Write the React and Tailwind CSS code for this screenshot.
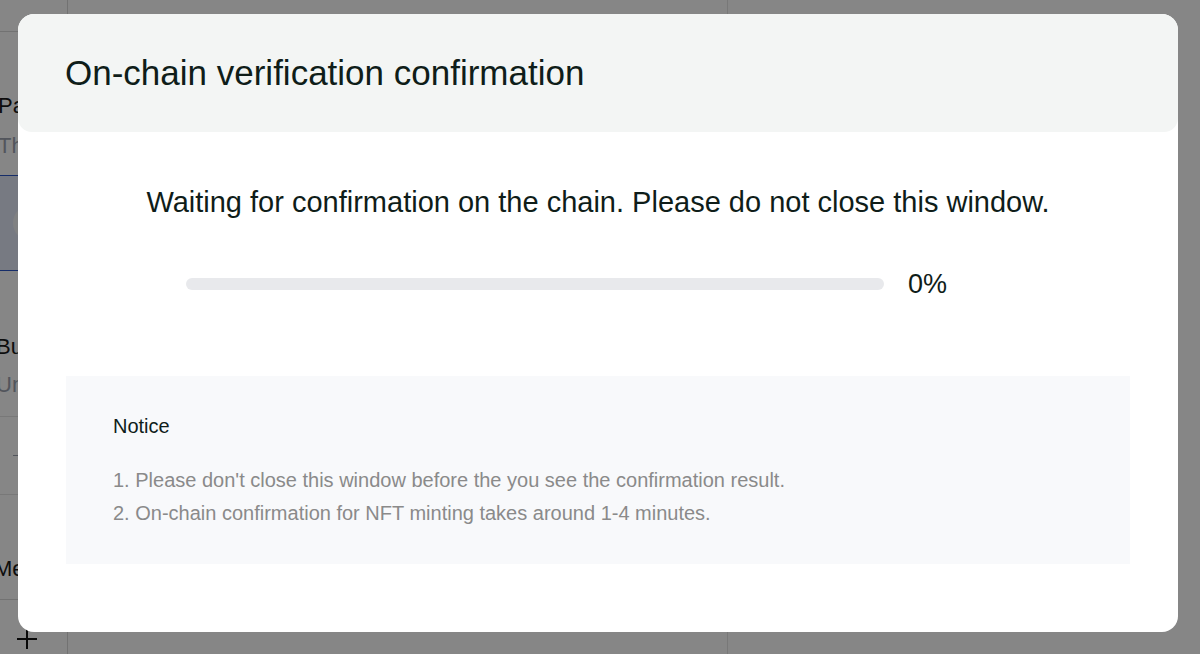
import React from "react";

const font = { fontFamily: '"Liberation Sans", Arial, sans-serif' };

function Background() {
  return (
    <div className="h-[654px] w-[1200px] bg-white flex" style={font}>
      <div className="w-[68px] border-r border-[#d9d9d9] flex flex-col">
        <div className="h-[32px] border-b border-[#d9d9d9]" />
        <div className="-ml-[2px] pt-[60px] text-[22px] leading-[28px] text-[#1a1a1a] whitespace-nowrap overflow-hidden">Payment</div>
        <div className="-ml-[2px] mt-[12px] text-[22px] leading-[28px] text-[#9ca3af] whitespace-nowrap overflow-hidden">The</div>
        <div className="mt-[15px] h-[96px] border-y border-[#2b56c9] bg-[#e3e8f8] flex items-center">
          <div className="ml-[13px] h-[36px] w-[36px] rounded-full bg-[#f4f5f8]" />
        </div>
        <div className="-ml-[4px] mt-[62px] text-[22px] leading-[28px] text-[#1a1a1a] whitespace-nowrap overflow-hidden">Bundle</div>
        <div className="-ml-[4px] mt-[10px] text-[22px] leading-[28px] text-[#9ca3af] whitespace-nowrap overflow-hidden">Unit</div>
        <div className="mt-[17px] h-[79px] border-y border-[#e5e5e5] flex items-center">
          <div className="ml-[13px] h-[1px] w-[6px] bg-[#9ca3af]" />
        </div>
        <div className="-ml-[6px] mt-[60px] text-[22px] leading-[28px] text-[#1a1a1a] whitespace-nowrap overflow-hidden">Metadata</div>
        <div className="mt-[16px] border-t border-[#d9d9d9] flex-1 flex items-start">
          <div className="ml-[17px] mt-[29px] relative h-[20px] w-[20px]">
            <div className="absolute left-[9px] top-0 h-[20px] w-[2px] bg-[#111]" />
            <div className="absolute left-0 top-[9px] h-[2px] w-[20px] bg-[#111]" />
          </div>
        </div>
      </div>
      <div className="w-[660px] border-r border-[#e5e5e5]" />
      <div className="flex-1" />
    </div>
  );
}

export default function App() {
  return (
    <div className="relative h-[654px] w-[1200px] overflow-hidden" style={font}>
      <Background />
      <div className="absolute inset-0 bg-[rgba(0,0,0,0.475)] flex items-start justify-start pl-[18px] pt-[14px]">
        <div className="w-[1160px] h-[618px] bg-white rounded-[16px] flex flex-col overflow-hidden">
          <div className="h-[118px] shrink-0 bg-[#f3f5f4] rounded-[14px] flex items-center px-[47px]">
            <h1 className="text-[35px] leading-[40px] text-[#0f1d19] font-normal">
              On-chain verification confirmation
            </h1>
          </div>
          <div className="flex flex-col items-center pt-[53px]">
            <p className="text-[29px] leading-[34px] text-[#0f1d19]">
              Waiting for confirmation on the chain. Please do not close this window.
            </p>
            <div className="self-start mt-[49px] ml-[168px] flex items-center gap-[24px]">
              <div className="w-[698px] h-[12px] rounded-full bg-[#e8e9ec]" />
              <span className="text-[27px] leading-[32px] text-[#0f1d19]">0%</span>
            </div>
          </div>
          <div className="mx-[48px] mt-[76px] h-[188px] bg-[#f8f9fb] px-[47px] pt-[37px]">
            <div className="text-[20px] leading-[26px] text-[#0f1d19]">Notice</div>
            <div className="mt-[25px] text-[20px] leading-[33px] text-[#8a8a8a]">
              <div>1. Please don't close this window before the you see the confirmation result.</div>
              <div>2. On-chain confirmation for NFT minting takes around 1-4 minutes.</div>
            </div>
          </div>
        </div>
      </div>
    </div>
  );
}
